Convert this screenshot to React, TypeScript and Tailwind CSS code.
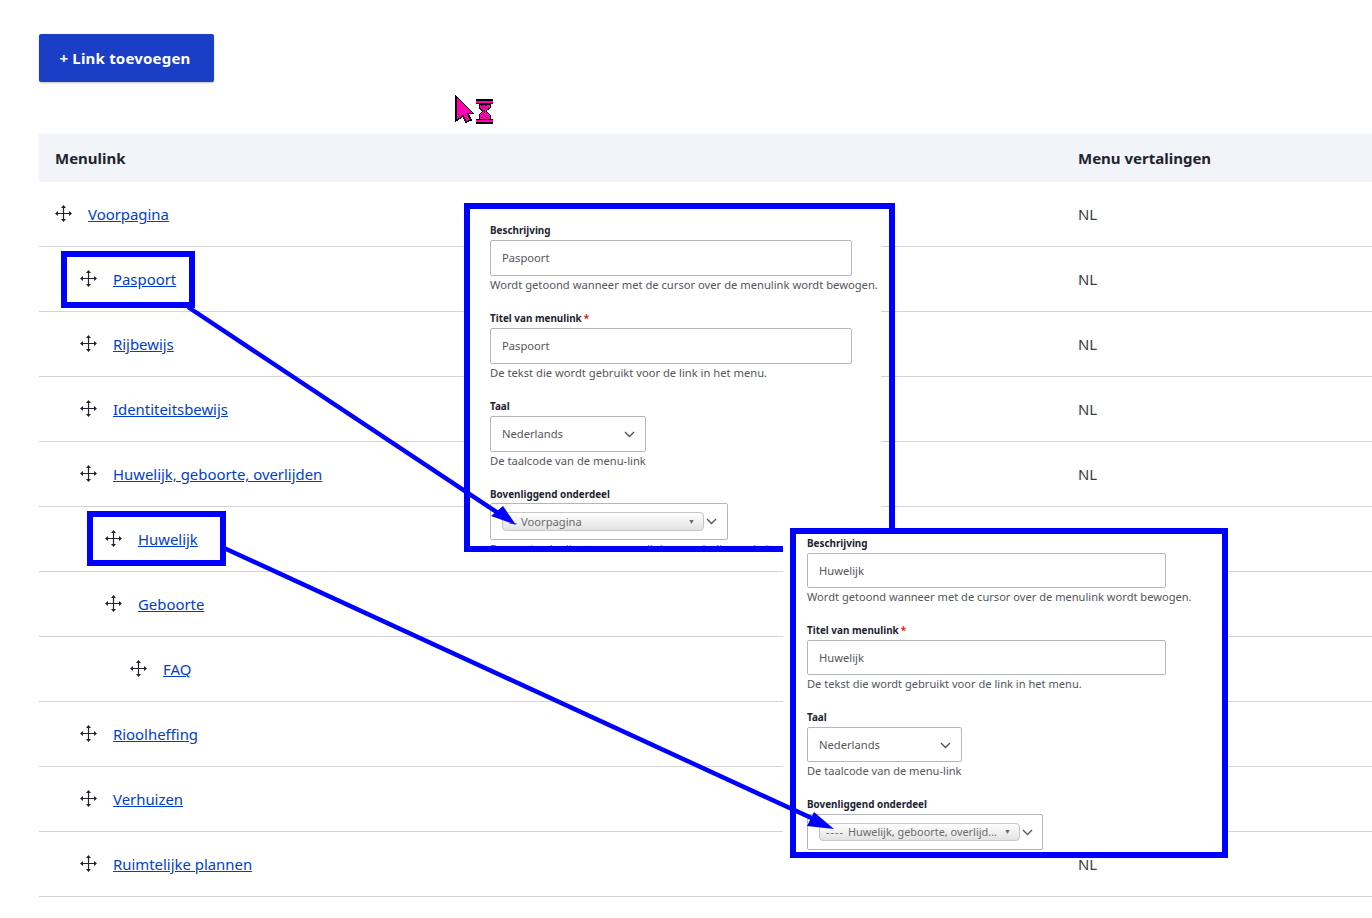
import React from 'react';

const rows = [
  { title: 'Voorpagina', level: 0 },
  { title: 'Paspoort', level: 1 },
  { title: 'Rijbewijs', level: 1 },
  { title: 'Identiteitsbewijs', level: 1 },
  { title: 'Huwelijk, geboorte, overlijden', level: 1 },
  { title: 'Huwelijk', level: 2 },
  { title: 'Geboorte', level: 2 },
  { title: 'FAQ', level: 3 },
  { title: 'Rioolheffing', level: 1 },
  { title: 'Verhuizen', level: 1 },
  { title: 'Ruimtelijke plannen', level: 1 },
];

const MoveIcon = () => (
  <svg width="17" height="17" viewBox="0 0 17 17" className="shrink-0">
    <path d="M8.5 2v13M2 8.5h13" stroke="#222330" strokeWidth="1.2" fill="none" />
    <path d="M8.5 0 6 3h5zM8.5 17 6 14h5zM0 8.5 3 6v5zM17 8.5 14 6v5z" fill="#222330" />
  </svg>
);

const Chevron = () => (
  <svg width="11" height="7" viewBox="0 0 11 7" className="shrink-0">
    <path d="M1 1 5.5 5.5 10 1" stroke="#55565b" strokeWidth="1.4" fill="none" />
  </svg>
);

const Label = ({ children, required }: { children: React.ReactNode; required?: boolean }) => (
  <div className="h-3 mb-1 flex items-center text-[9.9px] font-bold leading-3 text-[#222330]">
    {children}
    {required && <span className="ml-[2px] text-[#dc2323]">*</span>}
  </div>
);

const Help = ({ children, last, compact }: { children: React.ReactNode; last?: boolean; compact?: boolean }) => (
  <div className={`h-[18px] leading-[18px] whitespace-nowrap text-[#55565b] ${compact ? 'text-[11.1px]' : 'text-[11.2px]'} ${last ? '' : 'mb-[18px]'}`}>{children}</div>
);

function FormPanel({ title, prefix, parent, compact }: { title: string; prefix: string; parent: string; compact?: boolean }) {
  const box = 'border border-[#b5b6ba] rounded-[2px] bg-white text-[11.2px] text-[#55565b] flex items-center';
  const inputHeight = compact ? 'h-[35px] pt-[2px]' : 'h-9';
  const inputWidth = compact ? 'w-[359px]' : 'w-[362px]';
  return (
    <>
      <Label>Beschrijving</Label>
      <div className={`${box} ${inputHeight} ${inputWidth} pl-[11px]`}>{title}</div>
      <Help compact={compact}>Wordt getoond wanneer met de cursor over de menulink wordt bewogen.</Help>
      <Label required>Titel van menulink</Label>
      <div className={`${box} ${inputHeight} ${inputWidth} pl-[11px]`}>{title}</div>
      <Help compact={compact}>De tekst die wordt gebruikt voor de link in het menu.</Help>
      <Label>Taal</Label>
      <div className={`${box} ${inputHeight} ${compact ? 'w-[155px]' : 'w-[156px]'} pl-[11px] pr-[10px] justify-between`}>
        Nederlands
        <Chevron />
      </div>
      <Help compact={compact}>De taalcode van de menu-link</Help>
      <div className={compact ? '' : 'mb-[-1px]'}>
        <Label>Bovenliggend onderdeel</Label>
      </div>
      <div className={`${box} ${compact ? 'h-9 w-[236px]' : 'h-[37px] w-[238px]'} pl-[11px]`}>
        <div className={`${compact ? 'w-[201px] h-[18px] text-[10.9px]' : 'w-[202px] h-[19px] pt-[1px] text-[11.2px]'} border border-[#c6c6c6] rounded-[4px] bg-gradient-to-b from-white to-[#e2e2e2] flex items-center pl-[6px] pr-2 whitespace-nowrap text-[#6a6a6a]`}>
          <span className={`${compact ? 'w-[22px]' : 'w-3'} shrink-0 overflow-hidden tracking-[1px]`}>{prefix}</span>
          {parent}
          <span className="ml-auto text-[7px] text-[#666]">▼</span>
        </div>
        <div className="ml-[2px]">
          <Chevron />
        </div>
      </div>
      {!compact && <Help last>De maximale diepte voor een link en onderliggende items.</Help>}
    </>
  );
}

export default function App() {
  return (
    <div className="relative h-[918px] w-[1372px] overflow-hidden bg-white font-['Noto_Sans','Open_Sans',sans-serif] text-[#222330]">
      <div className="pl-[39px] pt-[34px]">
        <button className="h-12 w-[175px] rounded-[2px] bg-[#1b3ec6] pr-[3px] pt-[1px] text-[15px] font-bold tracking-[0.2px] text-white shadow-[0_1px_2px_rgba(0,0,0,0.25)]">
          + Link toevoegen
        </button>

        <div className="mt-[52px]">
          <div className="grid h-12 grid-cols-[1039px_1fr] items-center bg-[#f3f4f9] text-[15px] font-bold">
            <div className="pl-4">Menulink</div>
            <div>Menu vertalingen</div>
          </div>
          {rows.map((row) => (
            <div key={row.title} className="grid h-[65px] grid-cols-[1039px_1fr] items-center border-b border-[#d3d4d9] pb-[1px] text-[14.9px]">
              <div className="flex items-center gap-4 pl-4">
                {row.level > 0 && <div className={row.level === 1 ? 'w-[9px]' : row.level === 2 ? 'w-[34px]' : 'w-[59px]'} />}
                <MoveIcon />
                <a href="#" className="mt-[2px] text-[#003ecc] underline">{row.title}</a>
              </div>
              <div className="mt-[2px] text-[#3b3c42]">NL</div>
            </div>
          ))}
        </div>
      </div>

      {/* busy cursor */}
      <svg className="absolute left-[455px] top-[95px]" width="39" height="30" viewBox="0 0 39 30" shapeRendering="crispEdges">
        <path d="M1 1 18 18 13 19 16 25 11 27 8 21 1 26z" fill="#ff00b4" stroke="#000" strokeWidth="1.4" />
        <path d="M24 9h11v4l-4 3 4 4v4H24v-4l4-4-4-3z" fill="#ff00b4" stroke="#000" strokeWidth="1" />
        <path d="M21 4h17v2H21zM21 8h17v1H21zM21 24h17v1H21zM21 27h17v2H21z" fill="#000" />
        <path d="M21 6h17v2H21zM21 25h17v2H21z" fill="#ff00b4" />
        <path d="M26 10h2v1h-2zM30 10h2v1h-2zM28 12h2v1h-2zM29 15h1v3h-1zM28 20h1v1h-1zM30 21h1v1h-1zM26 22h2v1h-2zM31 22h2v1h-2z" fill="#000" />
      </svg>

      {/* highlight frames */}
      <div className="absolute left-[61px] top-[251px] h-[57px] w-[134px] border-[6px] border-[#0000ff]" />
      <div className="absolute left-[87px] top-[511px] h-[55px] w-[139px] border-[6px] border-[#0000ff]" />

      <div className="absolute left-[464px] top-[203px] h-[349px] w-[431px] border-[6px] border-[#0000ff]">
        <div className="h-full w-[411px] overflow-hidden bg-white pl-5 pt-[15px]">
          <FormPanel title="Paspoort" prefix="--" parent="Voorpagina" />
        </div>
      </div>

      <div className="absolute left-[790px] top-[528px] h-[330px] w-[438px] border-[6px] border-[#0000ff] bg-white pl-[11px] pt-[3px] shadow-[-7px_0_0_0_#ffffff]">
        <div className="h-full overflow-hidden">
          <FormPanel title="Huwelijk" prefix="----" parent="Huwelijk, geboorte, overlijd..." compact />
        </div>
      </div>

      {/* arrows */}
      <svg className="pointer-events-none absolute left-0 top-0" width="1372" height="918">
        <path d="M188 307 498 513" stroke="#0000ff" strokeWidth="4.5" fill="none" />
        <path d="M516 525 491 516 503 506z" fill="#0000ff" />
        <path d="M224 548 818 821" stroke="#0000ff" strokeWidth="4.5" fill="none" />
        <path d="M834 829 807 826 814 812z" fill="#0000ff" />
      </svg>
    </div>
  );
}
